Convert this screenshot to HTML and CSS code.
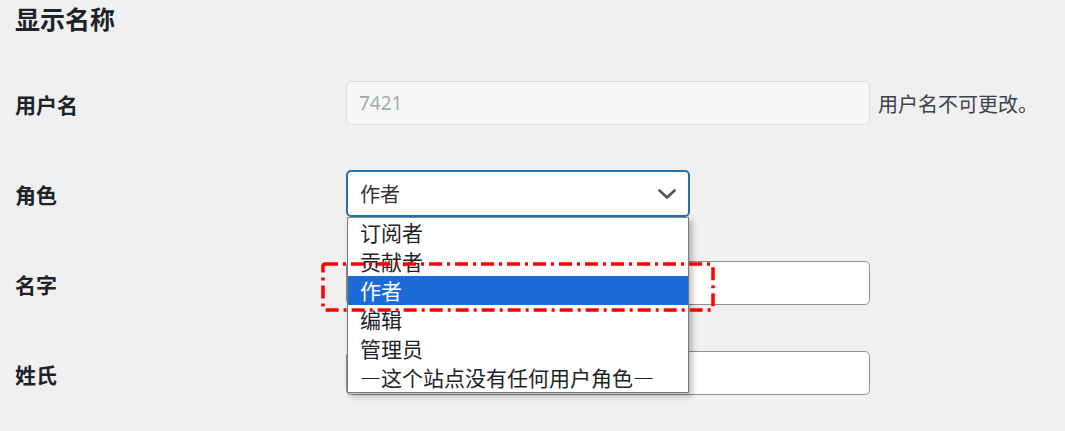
FILE: index.html
```html
<!DOCTYPE html>
<html lang="zh-CN">
<head>
<meta charset="utf-8">
<title>显示名称</title>
<link rel="stylesheet" href="styles.css">
</head>
<body>
<div class="page">
  <h2 class="section-title">显示名称</h2>
  <div class="form">
    <div class="row">
      <div class="label">用户名</div>
      <div class="field">
        <div class="input disabled">7421</div>
        <span class="desc">用户名不可更改。</span>
      </div>
    </div>
    <div class="row">
      <div class="label">角色</div>
      <div class="field">
        <div class="select-wrap">
          <div class="select">
            <span>作者</span>
            <svg class="chev" width="18" height="10" viewBox="0 0 18 10"><path d="M1.5 1.5 L9 8.5 L16.5 1.5" fill="none" stroke="#50575e" stroke-width="2.6" stroke-linecap="round" stroke-linejoin="round"/></svg>
          </div>
          <ul class="dropdown">
            <li>订阅者</li>
            <li>贡献者</li>
            <li class="active">作者</li>
            <li>编辑</li>
            <li>管理员</li>
            <li>—这个站点没有任何用户角色—</li>
          </ul>
        </div>
      </div>
    </div>
    <div class="row">
      <div class="label">名字</div>
      <div class="field">
        <div class="input"></div>
      </div>
    </div>
    <div class="row">
      <div class="label">姓氏</div>
      <div class="field">
        <div class="input"></div>
      </div>
    </div>
  </div>
</div>
<svg class="annot" width="400" height="56" viewBox="0 0 400 56">
  <rect x="2" y="2" width="390" height="46" rx="2" fill="none" stroke="#ff0000" stroke-width="3.5" stroke-dasharray="13 5 3 5" stroke-linecap="butt"/>
</svg>
</body>
</html>
```

FILE: styles.css
```css
html, body {
  margin: 0;
  padding: 0;
  background: #f0f0f1;
}
body {
  font-family: "Noto Sans CJK SC", "Noto Sans", sans-serif;
  color: #1d2327;
  position: relative;
  width: 1065px;
  height: 431px;
  overflow: hidden;
}
.page {
  padding-left: 15px;
}
.section-title {
  margin: 0;
  padding-top: 3px;
  height: 54px;
  font-size: 25px;
  line-height: 30px;
  font-weight: 700;
  color: #1d2327;
}
.row {
  display: flex;
  align-items: center;
  height: 90px;
}
.row:nth-child(1) { height: 91px; }
.label {
  width: 331px;
  flex: none;
  font-size: 21px;
  font-weight: 700;
  line-height: 28px;
  padding-top: 2px;
  color: #1d2327;
}
.field {
  display: flex;
  align-items: center;
}
.input {
  box-sizing: border-box;
  width: 524px;
  height: 44px;
  border: 1px solid #8c8f94;
  border-radius: 5px;
  background: #fff;
  padding-left: 12px;
  font-family: "Noto Sans", "Noto Sans CJK SC", sans-serif;
  font-size: 19px;
  line-height: 42px;
}
.input.disabled {
  background: #f6f7f7;
  border-color: #dcdcde;
  color: #a7aaad;
}
.desc {
  margin-left: 8px;
  font-size: 20px;
  color: #3c434a;
  line-height: 28px;
  padding-top: 2px;
}
.select-wrap {
  position: relative;
}
.select {
  box-sizing: border-box;
  width: 344px;
  height: 47px;
  border: 2px solid #2271b1;
  border-radius: 5px;
  background: #fff;
  padding: 0 12px 0 12px;
  display: flex;
  align-items: center;
  justify-content: space-between;
  font-size: 20px;
  color: #2c3338;
}
.chev {
  margin-top: 1px;
}
.dropdown {
  position: absolute;
  left: 1px;
  top: 47px;
  width: 342px;
  box-sizing: border-box;
  margin: 0;
  padding: 0;
  list-style: none;
  background: #fff;
  border: 1px solid #7a7a7a;
  border-top: 1px solid #8a8a8a;
  box-shadow: 3px 3px 6px rgba(0, 0, 0, 0.28);
  z-index: 5;
}
.dropdown li {
  height: 29px;
  line-height: 29px;
  padding-left: 12px;
  font-size: 21px;
  color: #1d2327;
  white-space: nowrap;
}
.dropdown li.active {
  background: #1b6ad5;
  color: #fff;
}
.annot {
  position: absolute;
  left: 321px;
  top: 262px;
  z-index: 10;
}
```
